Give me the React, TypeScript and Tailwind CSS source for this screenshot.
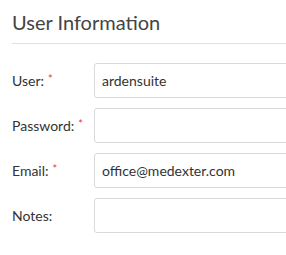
const fields = [
  { id: 'user', label: 'User:', value: 'ardensuite', required: true },
  { id: 'password', label: 'Password:', value: '', required: true },
  { id: 'email', label: 'Email:', value: 'office@medexter.com', required: true },
  { id: 'notes', label: 'Notes:', value: '', required: false },
];

export default function App() {
  return (
    <div className="h-[255px] w-[286px] overflow-hidden bg-white font-['Lato',sans-serif] text-[#333]">
      <div className="pl-3 pt-[9px]">
        <h2 className="text-[20px] leading-[26px] font-normal text-[#444]">User Information</h2>
        <div className="mt-[8px] border-b border-[#e0e0e0]" />
        <div className="mt-[19px] flex flex-col gap-[10px]">
          {fields.map((field) => (
            <div key={field.id} className="flex items-center">
              <label className="w-[82px] shrink-0 text-[14px]">
                {field.label}
                {field.required && <span className="relative -top-[3px] ml-[4px] text-[11px] text-[#e53935]">*</span>}
              </label>
              <input
                defaultValue={field.value}
                type="text"
                className="h-[35px] w-[220px] shrink-0 rounded-[3px] border border-[#d9d9d9] px-[7px] text-[14px] text-[#333] outline-none"
              />
            </div>
          ))}
        </div>
      </div>
    </div>
  );
}
